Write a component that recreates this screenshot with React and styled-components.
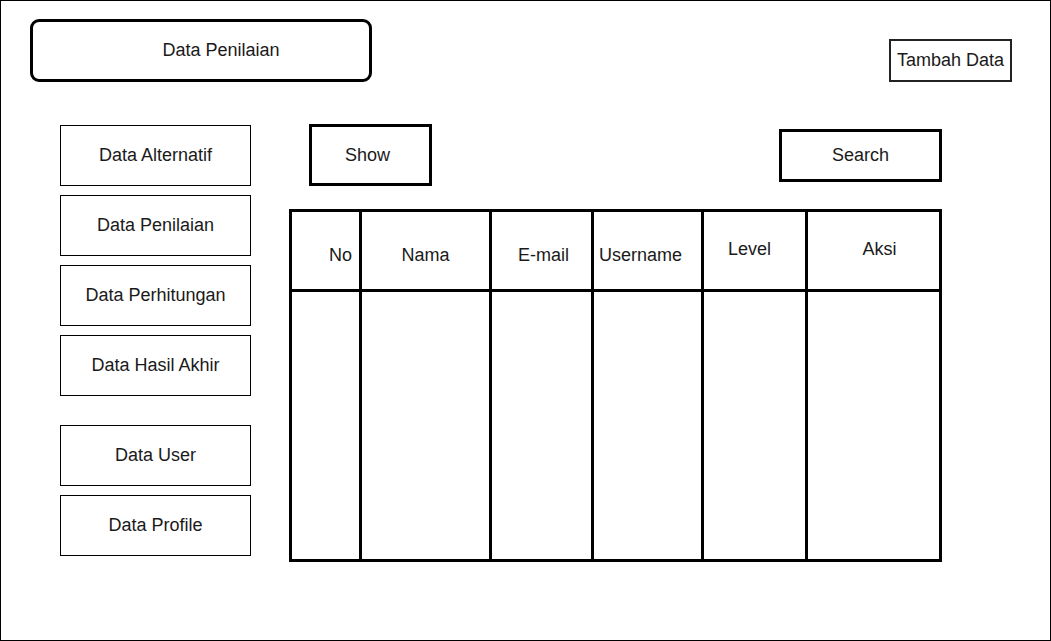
import React from "react";
import styled, { createGlobalStyle } from "styled-components";

const GlobalStyle = createGlobalStyle`
  * {
    box-sizing: border-box;
  }
  body {
    margin: 0;
    background: #ffffff;
    font-family: "Liberation Sans", Arial, Helvetica, sans-serif;
    color: #1a1a1a;
  }
`;

const menuTop = ["Data Alternatif", "Data Penilaian", "Data Perhitungan", "Data Hasil Akhir"];
const menuBottom = ["Data User", "Data Profile"];

// dx / dy move a label off the centre of its cell, as in the sketch
const columns = [
  { label: "No", width: 67, dx: 15, dy: 4 },
  { label: "Nama", width: 130, dx: 0, dy: 4 },
  { label: "E-mail", width: 102, dx: 2, dy: 4 },
  { label: "Username", width: 110, dx: -7, dy: 4 },
  { label: "Level", width: 104, dx: -5, dy: 0 },
  { label: "Aksi", width: 134, dx: 6, dy: 0 },
];

const App = () => {
  return (
    <>
      <GlobalStyle />
      <Frame>
        <Header>
          <TitleBox>Data Penilaian</TitleBox>
          <AddButton>Tambah Data</AddButton>
        </Header>
        <Body>
          <Sidebar>
            {menuTop.map((item) => (
              <MenuItem key={item}>{item}</MenuItem>
            ))}
            <MenuGroup>
              {menuBottom.map((item) => (
                <MenuItem key={item}>{item}</MenuItem>
              ))}
            </MenuGroup>
          </Sidebar>
          <Main>
            <Controls>
              <ShowBox>Show</ShowBox>
              <SearchBox>Search</SearchBox>
            </Controls>
            <Table $cols={columns.map((c) => c.width + "px").join(" ")}>
              {columns.map((col, i) => (
                <HeadCell key={col.label} $first={i === 0} $dx={col.dx} $dy={col.dy}>
                  {col.label}
                </HeadCell>
              ))}
              {columns.map((col, i) => (
                <BodyCell key={"b" + col.label} $first={i === 0} />
              ))}
            </Table>
          </Main>
        </Body>
      </Frame>
    </>
  );
};

const Frame = styled.div`
  width: 1051px;
  height: 641px;
  border: 1px solid #000;
  padding: 18px 38px 0 29px;
  font-size: 18px;
  line-height: 1;
`;

const Header = styled.div`
  display: flex;
  justify-content: space-between;
  align-items: flex-start;
`;

const TitleBox = styled.div`
  width: 342px;
  height: 63px;
  border: 3px solid #000;
  border-radius: 9px;
  display: flex;
  align-items: center;
  justify-content: center;
  padding-left: 40px;
  padding-bottom: 1px;
`;

const AddButton = styled.div`
  width: 123px;
  height: 43px;
  margin-top: 20px;
  border: 2px solid #222;
  display: flex;
  align-items: center;
  justify-content: center;
  padding-bottom: 2px;
`;

const Body = styled.div`
  display: flex;
  align-items: flex-start;
  margin-top: 42px;
  padding-left: 30px;
  gap: 38px;
`;

const Sidebar = styled.div`
  display: flex;
  flex-direction: column;
  gap: 9px;
  margin-top: 1px;
`;

const MenuGroup = styled.div`
  display: flex;
  flex-direction: column;
  gap: 9px;
  margin-top: 20px;
`;

const MenuItem = styled.div`
  width: 191px;
  height: 61px;
  border: 1px solid #000;
  display: flex;
  align-items: center;
  justify-content: center;
  padding-bottom: 2px;
`;

const Main = styled.div`
  display: flex;
  flex-direction: column;
  gap: 23px;
`;

const Controls = styled.div`
  display: flex;
  justify-content: space-between;
  align-items: flex-start;
`;

const ShowBox = styled.div`
  width: 123px;
  height: 62px;
  margin-left: 20px;
  border: 3px solid #000;
  display: flex;
  align-items: center;
  justify-content: center;
  padding-right: 6px;
`;

const SearchBox = styled.div`
  width: 163px;
  height: 53px;
  margin-top: 5px;
  border: 3px solid #000;
  display: flex;
  align-items: center;
  justify-content: center;
  padding-bottom: 2px;
`;

const Table = styled.div`
  display: grid;
  grid-template-columns: ${(p) => p.$cols};
  grid-template-rows: 80px 267px;
  width: 653px;
  height: 353px;
  border: 3px solid #000;
`;

const HeadCell = styled.div`
  border-left: ${(p) => (p.$first ? "none" : "3px solid #000")};
  border-bottom: 3px solid #000;
  display: flex;
  align-items: center;
  justify-content: center;
  padding-left: ${(p) => Math.max(0, p.$dx * 2)}px;
  padding-right: ${(p) => Math.max(0, -p.$dx * 2)}px;
  padding-top: ${(p) => Math.max(0, p.$dy * 2)}px;
  padding-bottom: ${(p) => Math.max(0, -p.$dy * 2 + 3)}px;
  white-space: nowrap;
`;

const BodyCell = styled.div`
  border-left: ${(p) => (p.$first ? "none" : "3px solid #000")};
`;

export default App;
